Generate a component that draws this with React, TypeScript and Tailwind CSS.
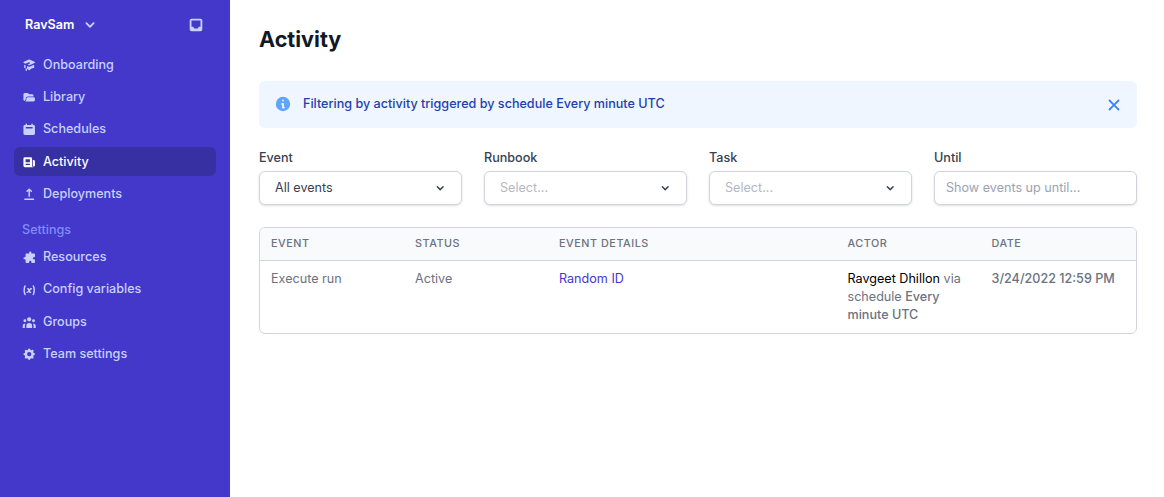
import React from 'react'
import {
  HiAcademicCap,
  HiFolderOpen,
  HiCalendar,
  HiNewspaper,
  HiUpload,
  HiPuzzle,
  HiVariable,
  HiUserGroup,
  HiCog,
  HiInbox,
  HiInformationCircle,
  HiX,
  HiChevronDown,
} from 'react-icons/hi'

const mainNav = [
  { name: 'Onboarding', icon: HiAcademicCap },
  { name: 'Library', icon: HiFolderOpen },
  { name: 'Schedules', icon: HiCalendar },
  { name: 'Activity', icon: HiNewspaper, active: true },
  { name: 'Deployments', icon: HiUpload },
]

const settingsNav = [
  { name: 'Resources', icon: HiPuzzle },
  { name: 'Config variables', icon: HiVariable },
  { name: 'Groups', icon: HiUserGroup },
  { name: 'Team settings', icon: HiCog },
]

function NavItem({ name, icon: Icon, active }: { name: string; icon: React.ElementType; active?: boolean }) {
  return (
    <a
      className={`flex h-[29px] items-center gap-[6.6px] rounded-md pl-[8px] text-[12.6px] font-medium ${
        active ? 'bg-[#3730a3] text-white' : 'text-[#c7d2fe]'
      }`}
    >
      <Icon className={`size-[14.4px] shrink-0 ${active ? 'text-white' : 'text-[#c7d2fe]'}`} />
      {name}
    </a>
  )
}

function Select({ label, value, placeholder }: { label: string; value?: string; placeholder?: string }) {
  return (
    <div>
      <label className="mb-[3px] block h-[20px] text-[12.6px] leading-[20px] font-medium text-[#374151]">{label}</label>
      <div className="flex h-[34px] items-center justify-between rounded-md border border-[#d1d5db] bg-white pr-[14px] pl-[15px] shadow-sm">
        <span className={`text-[12.6px] ${value ? 'text-[#374151]' : 'text-[#b4b8c2]'}`}>{value ?? placeholder}</span>
        <HiChevronDown className="size-[14.4px] text-[#374151]" />
      </div>
    </div>
  )
}

export default function App() {
  return (
    <div className="flex min-h-[497px] bg-white font-['Inter',sans-serif]">
      <aside className="w-[230px] shrink-0 bg-[#4338ca] px-[14px]">
        <div className="flex h-[50.6px] items-center justify-between pr-[11px] pl-[11px]">
          <div className="flex items-center gap-[7px] text-[12.6px] font-semibold text-white">
            RavSam
            <HiChevronDown className="size-[18px] text-[#c7d2fe]" />
          </div>
          <HiInbox className="size-[18px] text-[#c7d2fe]" />
        </div>
        <nav className="flex flex-col gap-[3.3px]">
          {mainNav.map((item) => (
            <NavItem key={item.name} {...item} />
          ))}
        </nav>
        <div className="mt-[11px] mb-[3.2px] h-[20px] pl-2 text-[12.6px] leading-[20px] font-medium text-[#818cf8]">Settings</div>
        <nav className="flex flex-col gap-[3.25px]">
          {settingsNav.map((item) => (
            <NavItem key={item.name} {...item} />
          ))}
        </nav>
      </aside>

      <main className="min-w-0 flex-1 pr-[27px] pl-[29px]">
        <h1 className="pt-[23px] text-[21.6px] leading-[32px] font-bold text-[#111827]">Activity</h1>

        <div className="mt-[26px] flex h-[47px] items-center justify-between rounded-md bg-[#eff6ff] pr-[14px] pl-[15px]">
          <div className="flex items-center gap-[11px]">
            <HiInformationCircle className="size-[18px] text-[#60a5fa]" />
            <span className="text-[12.6px] font-medium text-[#1e40af]">Filtering by activity triggered by schedule Every minute UTC</span>
          </div>
          <HiX className="size-[18px] text-[#3b82f6]" />
        </div>

        <div className="mt-[20px] grid grid-cols-4 gap-[22px]">
          <Select label="Event" value="All events" />
          <Select label="Runbook" placeholder="Select..." />
          <Select label="Task" placeholder="Select..." />
          <div>
            <label className="mb-[3px] block h-[20px] text-[12.6px] leading-[20px] font-medium text-[#374151]">Until</label>
            <div className="flex h-[34px] items-center rounded-md border border-[#d1d5db] bg-white px-[11px] shadow-sm">
              <span className="text-[12.6px] text-[#9ca3af]">Show events up until...</span>
            </div>
          </div>
        </div>

        <div className="mt-[22px] overflow-hidden rounded-md border border-[#d1d5db]">
          <table className="w-full table-fixed border-collapse text-left">
            <colgroup>
              <col className="w-[144px]" />
              <col className="w-[144px]" />
              <col className="w-[288.5px]" />
              <col className="w-[144px]" />
              <col />
            </colgroup>
            <thead className="bg-[#f9fafb]">
              <tr className="h-[32px] border-b border-[#d1d5db] text-[10.8px] font-medium tracking-[0.05em] text-[#6b7280] uppercase">
                <th className="px-[11px] font-medium">Event</th>
                <th className="px-[11px] font-medium">Status</th>
                <th className="px-[11px] font-medium">Event details</th>
                <th className="px-[11px] font-medium">Actor</th>
                <th className="px-[11px] font-medium">Date</th>
              </tr>
            </thead>
            <tbody className="align-top text-[12.6px] leading-[18px] text-[#6b7280]">
              <tr>
                <td className="px-[11px] pt-[9px] pb-[9px]">Execute run</td>
                <td className="px-[11px] pt-[9px]">Active</td>
                <td className="px-[11px] pt-[9px] text-[#4338ca]">Random ID</td>
                <td className="px-[11px] pt-[9px] pb-[9px]">
                  <span className="text-black">Ravgeet Dhillon</span> via schedule{' '}
                  <span className="font-medium">Every minute UTC</span>
                </td>
                <td className="px-[11px] pt-[9px] font-medium whitespace-nowrap">3/24/2022 12:59 PM</td>
              </tr>
            </tbody>
          </table>
        </div>
      </main>
    </div>
  )
}
